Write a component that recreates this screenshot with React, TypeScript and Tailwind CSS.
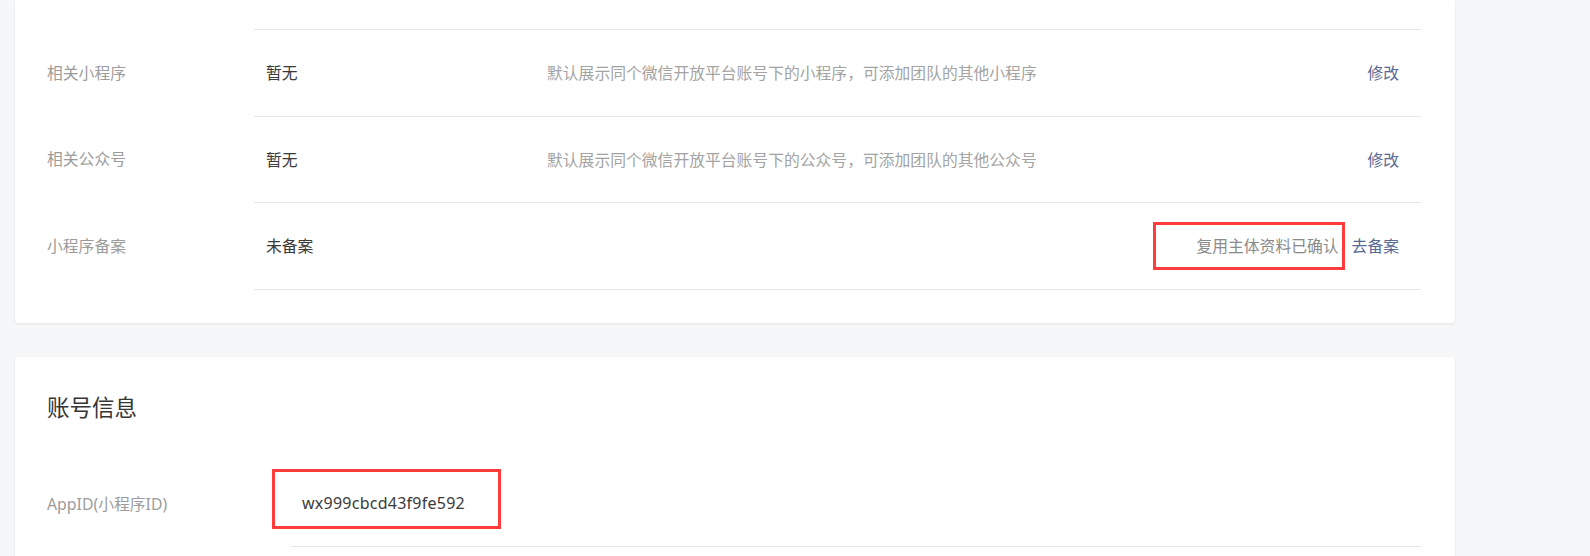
import React from "react";

const font = "font-['Noto_Sans','Noto_Sans_CJK_SC',sans-serif]";

function Row({
  label,
  value,
  desc,
  right,
  h,
}: {
  label: string;
  value: string;
  desc?: string;
  right: React.ReactNode;
  h: string;
}) {
  return (
    <div className="flex items-stretch">
      <div className="w-[239px] shrink-0 pl-[32px] flex items-center text-[#9c9c9c]">{label}</div>
      <div className={`flex-1 mr-[34px] border-t border-[#e6e6e6] flex items-center ${h}`}>
        <div className="w-[293px] shrink-0 pl-[12px] text-[#3a3a3a]">{value}</div>
        <div className="flex-1 text-[#a3a3a3]">{desc}</div>
        <div className="pr-[22px] flex items-center">{right}</div>
      </div>
    </div>
  );
}

export default function App() {
  return (
    <div className={`min-h-screen bg-[#f6f7f9] pl-[15px] ${font} text-[15.8px] leading-[20px]`}>
      <div className="w-[1440px] bg-white rounded-b-[4px] shadow-[0_1px_3px_rgba(0,0,0,0.08)] pb-[33px]">
        <div className="h-[29px]" />
        <Row
          label="相关小程序"
          value="暂无"
          desc="默认展示同个微信开放平台账号下的小程序，可添加团队的其他小程序"
          right={<span className="text-[#576b95]">修改</span>}
          h="h-[87px]"
        />
        <Row
          label="相关公众号"
          value="暂无"
          desc="默认展示同个微信开放平台账号下的公众号，可添加团队的其他公众号"
          right={<span className="text-[#576b95]">修改</span>}
          h="h-[86px]"
        />
        <Row
          label="小程序备案"
          value="未备案"
          right={
            <>
              <span className="relative text-[#8a8a8a]">
                复用主体资料已确认
                <span className="absolute left-[-43px] right-[-6px] top-[-14px] bottom-[-14px] border-[3px] border-[#ff3b3b]" />
              </span>
              <span className="ml-[13px] text-[#576b95]">去备案</span>
            </>
          }
          h="h-[87px]"
        />
        <div className="ml-[239px] mr-[34px] border-t border-[#e6e6e6]" />
      </div>

      <div className="mt-[34px] w-[1440px] bg-white rounded-[4px] shadow-[0_1px_3px_rgba(0,0,0,0.08)] pb-[40px]">
        <div className="pt-[40px] pl-[32px] text-[22.5px] leading-[22px] text-[#353535]">账号信息</div>
        <div className="mt-[41px] flex items-stretch">
          <div className="w-[276px] shrink-0 pl-[32px] flex items-center text-[#9c9c9c]">AppID(小程序ID)</div>
          <div className="flex-1 mr-[34px] border-b border-[#e6e6e6] h-[87px] flex items-center">
            <span className="relative ml-[11px] text-[#3a3a3a] text-[16px] tracking-[0.25px]">
              wx999cbcd43f9fe592
              <span className="absolute left-[-30px] right-[-36px] top-[-24px] bottom-[-16px] border-[3px] border-[#ff3b3b]" />
            </span>
          </div>
        </div>
      </div>
    </div>
  );
}
